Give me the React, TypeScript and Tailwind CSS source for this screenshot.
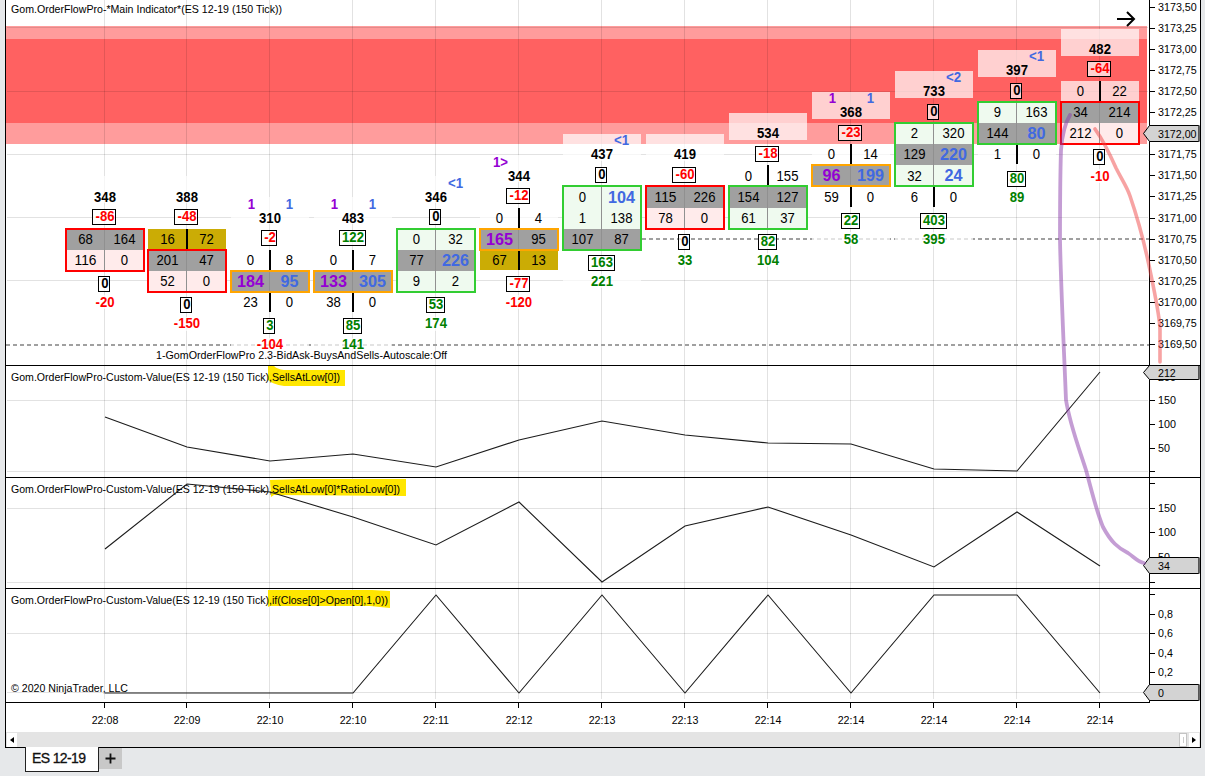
import React from "react";

type Tone = "red" | "green" | "black";
type Row = { l: string; r: string; fill?: "gray" | "gold"; hotL?: boolean; hotR?: boolean };
type Bar = {
  top: number;
  rows: Row[];
  body: [number, number];
  frame: "red" | "green" | "orange";
  volume: string;
  upper: string;
  lower: string;
  total: string;
  markL?: string;
  markR?: string;
};

const GRID_X = [105, 187, 270, 353, 436, 519, 602, 685, 768, 851, 934, 1017, 1100];
const TIMES = ["22:08", "22:09", "22:10", "22:10", "22:11", "22:12", "22:13", "22:13", "22:14", "22:14", "22:14", "22:14", "22:14"];
const PRICES = ["3173,50", "3173,25", "3173,00", "3172,75", "3172,50", "3172,25", "3172,00", "3171,75", "3171,50", "3171,25", "3171,00", "3170,75", "3170,50", "3170,25", "3170,00", "3169,75", "3169,50"];

const BARS: Bar[] = [
  { top: 11, rows: [{ l: "68", r: "164", fill: "gray" }, { l: "116", r: "0" }], body: [0, 1], frame: "red", volume: "348", upper: "-86", lower: "0", total: "-20" },
  { top: 11, rows: [{ l: "16", r: "72", fill: "gold" }, { l: "201", r: "47", fill: "gray" }, { l: "52", r: "0" }], body: [1, 2], frame: "red", volume: "388", upper: "-48", lower: "0", total: "-150" },
  { top: 12, rows: [{ l: "0", r: "8" }, { l: "184", r: "95", fill: "gray", hotL: true, hotR: true }, { l: "23", r: "0" }], body: [1, 1], frame: "orange", volume: "310", upper: "-2", lower: "3", total: "-104", markL: "1", markR: "1" },
  { top: 12, rows: [{ l: "0", r: "7" }, { l: "133", r: "305", fill: "gray", hotL: true, hotR: true }, { l: "38", r: "0" }], body: [1, 1], frame: "orange", volume: "483", upper: "122", lower: "85", total: "141", markL: "1", markR: "1" },
  { top: 11, rows: [{ l: "0", r: "32" }, { l: "77", r: "226", fill: "gray", hotR: true }, { l: "9", r: "2" }], body: [0, 2], frame: "green", volume: "346", upper: "0", lower: "53", total: "174", markR: "<1" },
  { top: 10, rows: [{ l: "0", r: "4" }, { l: "165", r: "95", fill: "gray", hotL: true }, { l: "67", r: "13", fill: "gold" }], body: [1, 1], frame: "orange", volume: "344", upper: "-12", lower: "-77", total: "-120", markL: "1>" },
  { top: 9, rows: [{ l: "0", r: "104", hotR: true }, { l: "1", r: "138" }, { l: "107", r: "87", fill: "gray" }], body: [0, 2], frame: "green", volume: "437", upper: "0", lower: "163", total: "221", markR: "<1" },
  { top: 9, rows: [{ l: "115", r: "226", fill: "gray" }, { l: "78", r: "0" }], body: [0, 1], frame: "red", volume: "419", upper: "-60", lower: "0", total: "33" },
  { top: 8, rows: [{ l: "0", r: "155" }, { l: "154", r: "127", fill: "gray" }, { l: "61", r: "37" }], body: [1, 2], frame: "green", volume: "534", upper: "-18", lower: "82", total: "104" },
  { top: 7, rows: [{ l: "0", r: "14" }, { l: "96", r: "199", fill: "gray", hotL: true, hotR: true }, { l: "59", r: "0" }], body: [1, 1], frame: "orange", volume: "368", upper: "-23", lower: "22", total: "58", markL: "1", markR: "1" },
  { top: 6, rows: [{ l: "2", r: "320" }, { l: "129", r: "220", fill: "gray", hotR: true }, { l: "32", r: "24", hotR: true }, { l: "6", r: "0" }], body: [0, 2], frame: "green", volume: "733", upper: "0", lower: "403", total: "395", markR: "<2" },
  { top: 5, rows: [{ l: "9", r: "163" }, { l: "144", r: "80", fill: "gray", hotR: true }, { l: "1", r: "0" }], body: [0, 1], frame: "green", volume: "397", upper: "0", lower: "80", total: "89", markR: "<1" },
  { top: 4, rows: [{ l: "0", r: "22" }, { l: "34", r: "214", fill: "gray" }, { l: "212", r: "0" }], body: [1, 2], frame: "red", volume: "482", upper: "-64", lower: "0", total: "-10" },
];

const FRAME = { red: "#ff0000", green: "#32cd32", orange: "#ffa500" };
const BODY = { red: "#ffebeb", green: "#effaef", orange: "#ffffff" };
const TONE: Record<Tone, string> = { red: "#ff0000", green: "#008000", black: "#000000" };

const center = (k: number) => 7 + 21.1 * k;
const edge = (k: number) => Math.round(21.1 * k - 3.45);
const tone = (v: string): Tone => (v === "0" ? "black" : v.startsWith("-") ? "red" : "green");

// Digits are drawn slightly condensed: advance widths follow the 10pt face, height the next size up.
const advance = (v: string) => [...v].reduce((w, ch) => w + (ch === "-" ? 4.4 : ch === "<" || ch === ">" ? 7.8 : 7.3), 0);

function Num({ x, y, children, color = "#000", bold, big }: { x: number; y: number; children: string; color?: string; bold?: boolean; big?: boolean }) {
  const base = Math.round(y + (big ? 5.6 : 4.7));
  if (big) {
    return (
      <text x={x} y={base} textAnchor="middle" fill={color} fontSize={16.2} fontWeight={700}>
        {children}
      </text>
    );
  }
  const w = advance(children);
  return (
    <text x={x - w / 2} y={base} textLength={w} lengthAdjust="spacingAndGlyphs" fill={color} fontSize={14.2} fontWeight={bold ? 700 : 400}>
      {children}
    </text>
  );
}

function Boxed({ x, y, value }: { x: number; y: number; value: string }) {
  const digits = value.replace("-", "").length;
  const w = Math.round(digits * 7.4 + (value.startsWith("-") ? 4.4 : 0) + 3.6);
  const left = Math.floor(x - 0.8 - w / 2) + 0.5;
  const t = Math.round(y - 7.9) + 0.5;
  return (
    <g>
      <rect x={left} y={t} width={w} height={15} fill="#fff" fillOpacity={0.7} stroke="#000" />
      <Num x={x} y={t + 6.8} bold color={TONE[tone(value)]}>{value}</Num>
    </g>
  );
}

function Footprint({ bar, x }: { bar: Bar; x: number }) {
  const { top, rows, body } = bar;
  const last = top + rows.length - 1;
  const vol = center(top - 2);
  const total = center(last + 2);
  const y0 = edge(top + body[0]);
  const y1 = edge(top + body[1] + 1);
  return (
    <g>
      <rect x={x - 39} y={Math.floor(vol - 20.1)} width={78} height={27} fill="#fff" fillOpacity={0.7} />
      <rect x={x - 39} y={Math.round(total - 7)} width={78} height={14} fill="#fff" fillOpacity={0.7} />
      {bar.markL && <Num x={x - 18.5} y={vol - 14} bold color="#9400d3">{bar.markL}</Num>}
      {bar.markR && <Num x={x + 19.5} y={vol - 14} bold color="#4169e1">{bar.markR}</Num>}
      <Num x={x} y={vol} bold>{bar.volume}</Num>
      <Boxed x={x} y={center(top - 1) - 1} value={bar.upper} />
      {rows.map((row, i) => {
        const inside = i >= body[0] && i <= body[1];
        const t = edge(top + i);
        const h = edge(top + i + 1) - t;
        const fill = row.fill === "gray" ? "#a0a0a0" : row.fill === "gold" ? "#cbac05" : inside ? BODY[bar.frame] : "#fff";
        return (
          <g key={i}>
            <rect x={x - 39} y={t} width={78} height={inside ? h : h - 1} fill={fill} fillOpacity={inside || row.fill ? 1 : 0.7} />
            {inside ? <rect x={x - 1} y={t} width={1} height={h} fill="#909090" /> : <rect x={x - 1} y={t} width={2} height={h - 1} fill="#000" />}
          </g>
        );
      })}
      <rect x={x - 39} y={y0} width={78} height={y1 - y0} fill="none" stroke={FRAME[bar.frame]} strokeWidth={2} />
      {rows.map((row, i) => (
        <g key={i}>
          <Num x={x - 19.5} y={center(top + i)} big={row.hotL} color={row.hotL ? "#9400d3" : "#000"}>{row.l}</Num>
          <Num x={x + 19.5} y={center(top + i)} big={row.hotR} color={row.hotR ? "#4169e1" : "#000"}>{row.r}</Num>
        </g>
      ))}
      <Boxed x={x} y={center(last + 1) + 2.6} value={bar.lower} />
      <Num x={x} y={total} bold color={TONE[tone(bar.total)]}>{bar.total}</Num>
    </g>
  );
}

function Grid({ top, bottom, lines }: { top: number; bottom: number; lines: number[] }) {
  return (
    <g fill="#000" fillOpacity={0.115}>
      {GRID_X.map((x) => <rect key={x} x={x - 1} y={top} width={1} height={bottom - top} />)}
      {lines.map((y) => <rect key={y} x={7} y={y} width={1141} height={1} />)}
    </g>
  );
}

function Axis({ top, bottom, ticks }: { top: number; bottom: number; ticks: [number, string][] }) {
  return (
    <g>
      <rect x={1149} y={top} width={1} height={bottom - top} fill="#000" />
      {ticks.map(([y, label]) => (
        <g key={y}>
          <rect x={1150} y={Math.floor(y)} width={5} height={1} fill="#000" />
          <text x={1158} y={Math.floor(y + 4)} fontSize={10.9} textLength={label ? label.length * 6 - (label.includes(",") ? 3.2 : 0) : undefined} lengthAdjust="spacingAndGlyphs">{label}</text>
        </g>
      ))}
    </g>
  );
}

function Tag({ y, h = 16, label }: { y: number; h?: number; label: string }) {
  return (
    <g>
      <path d={`M1143.5 ${y + h / 2}L1149.5 ${y}H1199V${y + h}H1149.5Z`} fill="#d3d3d3" stroke="#000" />
      <rect x={1198} y={y} width={1.5} height={h} fill="#555" />
      <text x={1158} y={y + h / 2 + 4} fontSize={10.67}>{label}</text>
    </g>
  );
}

function Panel({ top, height, last, children }: { top: number; height: number; last?: boolean; children: React.ReactNode }) {
  return (
    <div className={last ? "" : "border-b border-black"}>
      <svg className="block" width={1194} height={height} viewBox={`6 ${top} 1194 ${height}`} fontFamily="Liberation Sans, Arial, sans-serif">
        {children}
      </svg>
    </div>
  );
}

function Title({ y, highlight, arg, width }: { y: number; highlight: string; arg: string; width: number }) {
  return (
    <g>
      <path d={highlight} fill="#ffe600" />
      <text x={11} y={y} fontSize={10.9} textLength={258} lengthAdjust="spacingAndGlyphs">Gom.OrderFlowPro-Custom-Value(ES 12-19 (150 Tick)</text>
      <text x={269} y={y} fontSize={10.9} textLength={width} lengthAdjust="spacingAndGlyphs">{arg}</text>
    </g>
  );
}

function Series({ ys }: { ys: number[] }) {
  return <polyline points={ys.map((y, i) => `${GRID_X[i]},${y}`).join(" ")} fill="none" stroke="#1c1c1c" strokeWidth={1.1} />;
}

export default function App() {
  return (
    <div className="relative h-[776px] w-[1205px] overflow-hidden bg-[#e6e8ea] pl-[5px] font-['Liberation_Sans',Arial,sans-serif] text-black">
      <div className="flex w-[1196px] flex-col border-x border-b border-black bg-white">
        <Panel top={0} height={365}>
          <rect x={6} y={26} width={1141} height={118} fill="#ff9c9c" />
          <rect x={6} y={39} width={1141} height={84} fill="#ff6161" />
          <Grid top={0} bottom={365} lines={[27, 91, 154, 217, 280]} />
          <line x1={6} x2={1149} y1={345} y2={345} stroke="#a0a0a0" strokeWidth={2} strokeDasharray="4 3" />
          <line x1={642} x2={1149} y1={239} y2={239} stroke="#a0a0a0" strokeWidth={2} strokeDasharray="4 3" />
          {BARS.map((bar, i) => <Footprint key={i} bar={bar} x={GRID_X[i]} />)}
          <text x={11} y={13} fontSize={10.9} textLength={271} lengthAdjust="spacingAndGlyphs">Gom.OrderFlowPro-*Main Indicator*(ES 12-19 (150 Tick))</text>
          <text x={156} y={359} fontSize={10.9} textLength={291} lengthAdjust="spacingAndGlyphs">1-GomOrderFlowPro 2.3-BidAsk-BuysAndSells-Autoscale:Off</text>
          <path d="M1117 19H1134M1127 12L1134 19L1127 26" fill="none" stroke="#000" strokeWidth={2} />
          <Axis top={0} bottom={365} ticks={PRICES.map((p, k): [number, string] => [center(k), p])} />
          <Tag y={125.5} label="3172,00" />
        </Panel>
        <Panel top={366} height={111}>
          <Grid top={366} bottom={477} lines={[400, 471]} />
          <Title y={381} arg=",SellsAtLow[0])" width={71} highlight="M268 366H274Q277 369 284 370H345V386H284Q272 384 268 380Z" />
          <Series ys={[417, 447, 461, 454, 467, 440, 421, 435, 443, 444, 469, 471, 372]} />
          <Axis top={366} bottom={477} ticks={[[377.5, "200"], [400.8, "150"], [424.5, "100"], [448, "50"], [471.5, ""]]} />
          <Tag y={365.5} h={14} label="212" />
        </Panel>
        <Panel top={478} height={110}>
          <Grid top={478} bottom={588} lines={[508, 582]} />
          <Title y={493} arg=",SellsAtLow[0]*RatioLow[0])" width={131} highlight="M270 480L300 479H406V496L274 495L271 497Z" />
          <Series ys={[549, 484, 492, 517, 545, 502, 582, 526, 507, 535, 567, 512, 566]} />
          <Axis top={478} bottom={588} ticks={[[483.3, ""], [508.8, "150"], [532.8, "100"], [557.5, "50"], [582.3, ""]]} />
          <Tag y={557.5} label="34" />
        </Panel>
        <Panel top={589} height={114} last>
          <Grid top={589} bottom={699} lines={[633, 692]} />
          <Title y={604} arg=",if(Close[0]>Open[0],1,0))" width={119} highlight="M268 590H372L390 591V608L370 606H270L268 607Z" />
          <Series ys={[693, 693, 693, 693, 595, 693, 595, 693, 595, 693, 595, 595, 693]} />
          <text x={11} y={692} fontSize={10.9} textLength={117} lengthAdjust="spacingAndGlyphs">© 2020 NinjaTrader, LLC</text>
          <Axis top={589} bottom={703} ticks={[[594.5, ""], [614.8, "0,8"], [633.8, "0,6"], [653.5, "0,4"], [672.8, "0,2"]]} />
          <Tag y={684.5} label="0" />
          <rect x={6} y={702} width={1144} height={1} fill="#000" />
        </Panel>
        <svg className="block" width={1194} height={29} viewBox="6 703 1194 29" fontFamily="Liberation Sans, Arial, sans-serif">
          {GRID_X.map((x, i) => (
            <g key={x}>
              <rect x={x - 1} y={703} width={1} height={5} />
              <text x={x} y={724} fontSize={10.67} textAnchor="middle">{TIMES[i]}</text>
            </g>
          ))}
        </svg>
        <div className="flex h-[15px] items-center justify-between bg-[#e4e4e4]">
          <div className="ml-px flex h-[14px] w-[10px] items-center justify-center bg-white">
            <svg width="4" height="6" viewBox="0 0 4 6"><path d="M4 0V6L0 3Z" /></svg>
          </div>
          <div className="flex h-full items-center">
            <div className="flex h-[14px] w-[8px] justify-center border border-[#c4c4c4] bg-white py-[3px]">
              <div className="w-px bg-[#ccc]" />
            </div>
            <div className="ml-[2px] mr-px flex h-[14px] w-[10px] items-center justify-center bg-white">
              <svg width="4" height="6" viewBox="0 0 4 6"><path d="M0 0V6L4 3Z" /></svg>
            </div>
          </div>
        </div>
      </div>
      <div className="-mt-px ml-5 flex items-start">
        <div className="flex h-[25px] w-[74px] items-center border border-t-0 border-[#222] bg-white pb-[3px] pl-[6px]">
          <svg width="56" height="20"><text x="0" y="15" fontSize="14" fontFamily="Liberation Sans, sans-serif" fill="#111" textLength="54" lengthAdjust="spacing" stroke="#111" strokeWidth="0.3">ES 12-19</text></svg>
        </div>
        <div className="mt-px flex h-[21px] w-[23px] items-center justify-center bg-[#c8c8c8]">
          <svg width="11" height="11" viewBox="0 0 11 11"><path d="M5.5 0.5V10.5M0.5 5.5H10.5" stroke="#111" strokeWidth="1.8" /></svg>
        </div>
      </div>
      <svg className="pointer-events-none absolute left-0 top-0" width={1205} height={776} fill="none" strokeLinecap="round" strokeLinejoin="round">
        <path d="M1070 115C1064 125 1062 136 1061 150C1060 180 1060 220 1060 240C1061 290 1064 350 1066 400C1070 425 1078 445 1086 470C1092 492 1096 510 1103 527C1111 542 1118 548 1128 553C1134 557 1138 562 1144 563" stroke="#8a3caa" strokeOpacity={0.5} strokeWidth={3.8} />
        <path d="M1095 129Q1105 143 1116 168C1122 180 1127 187 1130 196C1139 222 1146 250 1151 275C1156 300 1160 318 1160 330V362" stroke="#f04848" strokeOpacity={0.5} strokeWidth={3.6} />
      </svg>
    </div>
  );
}
